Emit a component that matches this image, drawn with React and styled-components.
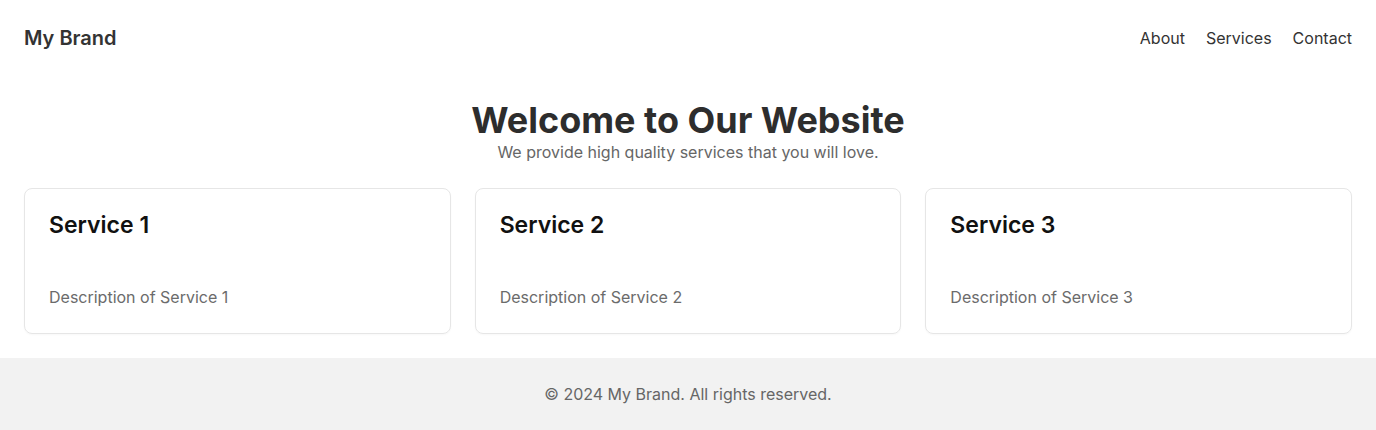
import React from "react";
import styled, { createGlobalStyle } from "styled-components";

const Global = createGlobalStyle`
  * { box-sizing: border-box; }
  body { margin: 0; font-family: Inter, "Noto Sans", sans-serif; background: #fff; color: #333; }
`;

const Header = styled.header`
  display: flex;
  align-items: center;
  justify-content: space-between;
  padding: 24px;
  height: 76px;
`;

const Brand = styled.div`
  font-size: 20px;
  font-weight: 600;
  color: #333;
`;

const Nav = styled.nav`
  display: flex;
  gap: 21px;
`;

const NavLink = styled.a`
  font-size: 16px;
  color: #333;
  text-decoration: none;
`;

const Main = styled.main`
  padding: 24px;
  display: flex;
  flex-direction: column;
  gap: 24px;
`;

const Hero = styled.section`
  text-align: center;
`;

const Title = styled.h1`
  margin: 0;
  font-size: 36px;
  line-height: 40px;
  font-weight: 700;
  color: #2d2d2d;
`;

const Subtitle = styled.p`
  margin: 0;
  font-size: 16px;
  line-height: 24px;
  color: #666;
`;

const Grid = styled.div`
  display: grid;
  grid-template-columns: repeat(3, 1fr);
  gap: 24px;
`;

const Card = styled.div`
  border: 1px solid #e6e6e6;
  border-radius: 8px;
  padding: 24px;
  display: flex;
  flex-direction: column;
  gap: 48px;
  box-shadow: 0 1px 2px rgba(0, 0, 0, 0.03);
`;

const CardTitle = styled.h3`
  margin: 0;
  font-size: 23px;
  line-height: 24px;
  font-weight: 600;
  color: #111;
`;

const CardText = styled.p`
  margin: 0;
  font-size: 16px;
  line-height: 24px;
  color: #6b6b6b;
`;

const Footer = styled.footer`
  background: #f2f2f2;
  padding: 24px;
  text-align: center;
  font-size: 16px;
  line-height: 24px;
  color: #666;
`;

const services = [1, 2, 3];

export default function App() {
  return (
    <>
      <Global />
      <Header>
        <Brand>My Brand</Brand>
        <Nav>
          <NavLink href="#">About</NavLink>
          <NavLink href="#">Services</NavLink>
          <NavLink href="#">Contact</NavLink>
        </Nav>
      </Header>
      <Main>
        <Hero>
          <Title>Welcome to Our Website</Title>
          <Subtitle>We provide high quality services that you will love.</Subtitle>
        </Hero>
        <Grid>
          {services.map((n) => (
            <Card key={n}>
              <CardTitle>Service {n}</CardTitle>
              <CardText>Description of Service {n}</CardText>
            </Card>
          ))}
        </Grid>
      </Main>
      <Footer>© 2024 My Brand. All rights reserved.</Footer>
    </>
  );
}
